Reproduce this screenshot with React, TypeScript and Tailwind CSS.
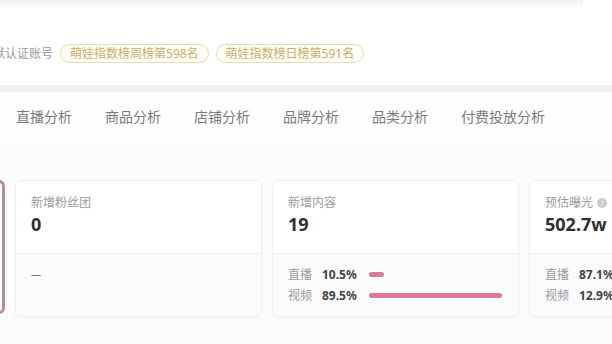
import React from "react";

const font = { fontFamily: '"Noto Sans", "Noto Sans CJK SC", sans-serif' };

const tabs = ["直播分析", "商品分析", "店铺分析", "品牌分析", "品类分析", "付费投放分析"];

interface Split {
  label: string;
  pct: string;
  width: number;
}

function Bars({ rows }: { rows: Split[] }) {
  return (
    <div className="flex flex-col gap-[6px] pt-[13px]">
      {rows.map((r) => (
        <div key={r.label} className="flex items-center h-[15px]">
          <span className="text-[12px] text-[#9a9a9a] w-[34px]">{r.label}</span>
          <span className="text-[12px] font-bold text-[#444] w-[47px]">{r.pct}</span>
          <div
            className="h-[5px] rounded-full bg-[#d9799b]"
            style={{ width: r.width }}
          />
        </div>
      ))}
    </div>
  );
}

function Card({
  title,
  value,
  info,
  children,
}: {
  title: string;
  value: string;
  info?: boolean;
  children: React.ReactNode;
}) {
  return (
    <div className="w-[247px] h-[137px] shrink-0 bg-white border border-[#efefef] rounded-[6px] shadow-[0_1px_3px_rgba(0,0,0,0.04)] flex flex-col overflow-hidden">
      <div className="px-[15px] pt-[14px] h-[72px]">
        <div className="flex items-center gap-[4px] text-[12px] text-[#9b9b9b] leading-[16px]">
          {title}
          {info && (
            <span className="w-[10px] h-[10px] rounded-full bg-[#c9c9d2] inline-flex items-center justify-center text-[7px] text-white leading-none">
              ?
            </span>
          )}
        </div>
        <div className="text-[18px] font-bold text-[#2f2f2f] leading-[24px] mt-[1px]">
          {value}
        </div>
      </div>
      <div className="flex-1 bg-[#fafbfc] border-t border-[#f1f1f3] px-[15px]">
        {children}
      </div>
    </div>
  );
}

export default function App() {
  return (
    <div className="w-[612px] h-[344px] overflow-hidden bg-white" style={font}>
      <div className="h-[8px] w-[583px] bg-gradient-to-b from-[#efeff1] to-white" />
      <div className="h-[77px] flex items-start pt-[36px]">
        <div className="flex items-center gap-[7px] ml-[-7px]">
          <span className="text-[12px] text-[#9a9a9a]">默认证账号</span>
          <span className="h-[19px] px-[9px] rounded-full border border-[#e9ddb0] bg-[#fffdf6] text-[12px] text-[#c9ad6b] flex items-center">
            萌娃指数榜周榜第598名
          </span>
          <span className="h-[19px] px-[9px] rounded-full border border-[#e9ddb0] bg-[#fffdf6] text-[12px] text-[#c9ad6b] flex items-center">
            萌娃指数榜日榜第591名
          </span>
        </div>
      </div>
      <div className="h-[7px] bg-[#f1f1f4]" />
      <div className="h-[48px] flex items-center gap-[33px] pl-[16px] bg-[#fdfdfe]">
        {tabs.map((t) => (
          <span key={t} className="text-[14px] text-[#7a7a7a]">
            {t}
          </span>
        ))}
      </div>
      <div className="bg-[#fcfcfd] h-[204px] pt-[40px]">
        <div className="flex gap-[10px] ml-[-242px]">
          <div className="w-[247px] h-[134px] shrink-0 rounded-[6px] border-[3px] border-[#b98b97] bg-white" />
          <Card title="新增粉丝团" value="0">
            <div className="pt-[13px] text-[10px] text-[#777]">—</div>
          </Card>
          <Card title="新增内容" value="19">
            <Bars
              rows={[
                { label: "直播", pct: "10.5%", width: 15 },
                { label: "视频", pct: "89.5%", width: 133 },
              ]}
            />
          </Card>
          <Card title="预估曝光" value="502.7w" info>
            <Bars
              rows={[
                { label: "直播", pct: "87.1%", width: 130 },
                { label: "视频", pct: "12.9%", width: 19 },
              ]}
            />
          </Card>
        </div>
      </div>
    </div>
  );
}
